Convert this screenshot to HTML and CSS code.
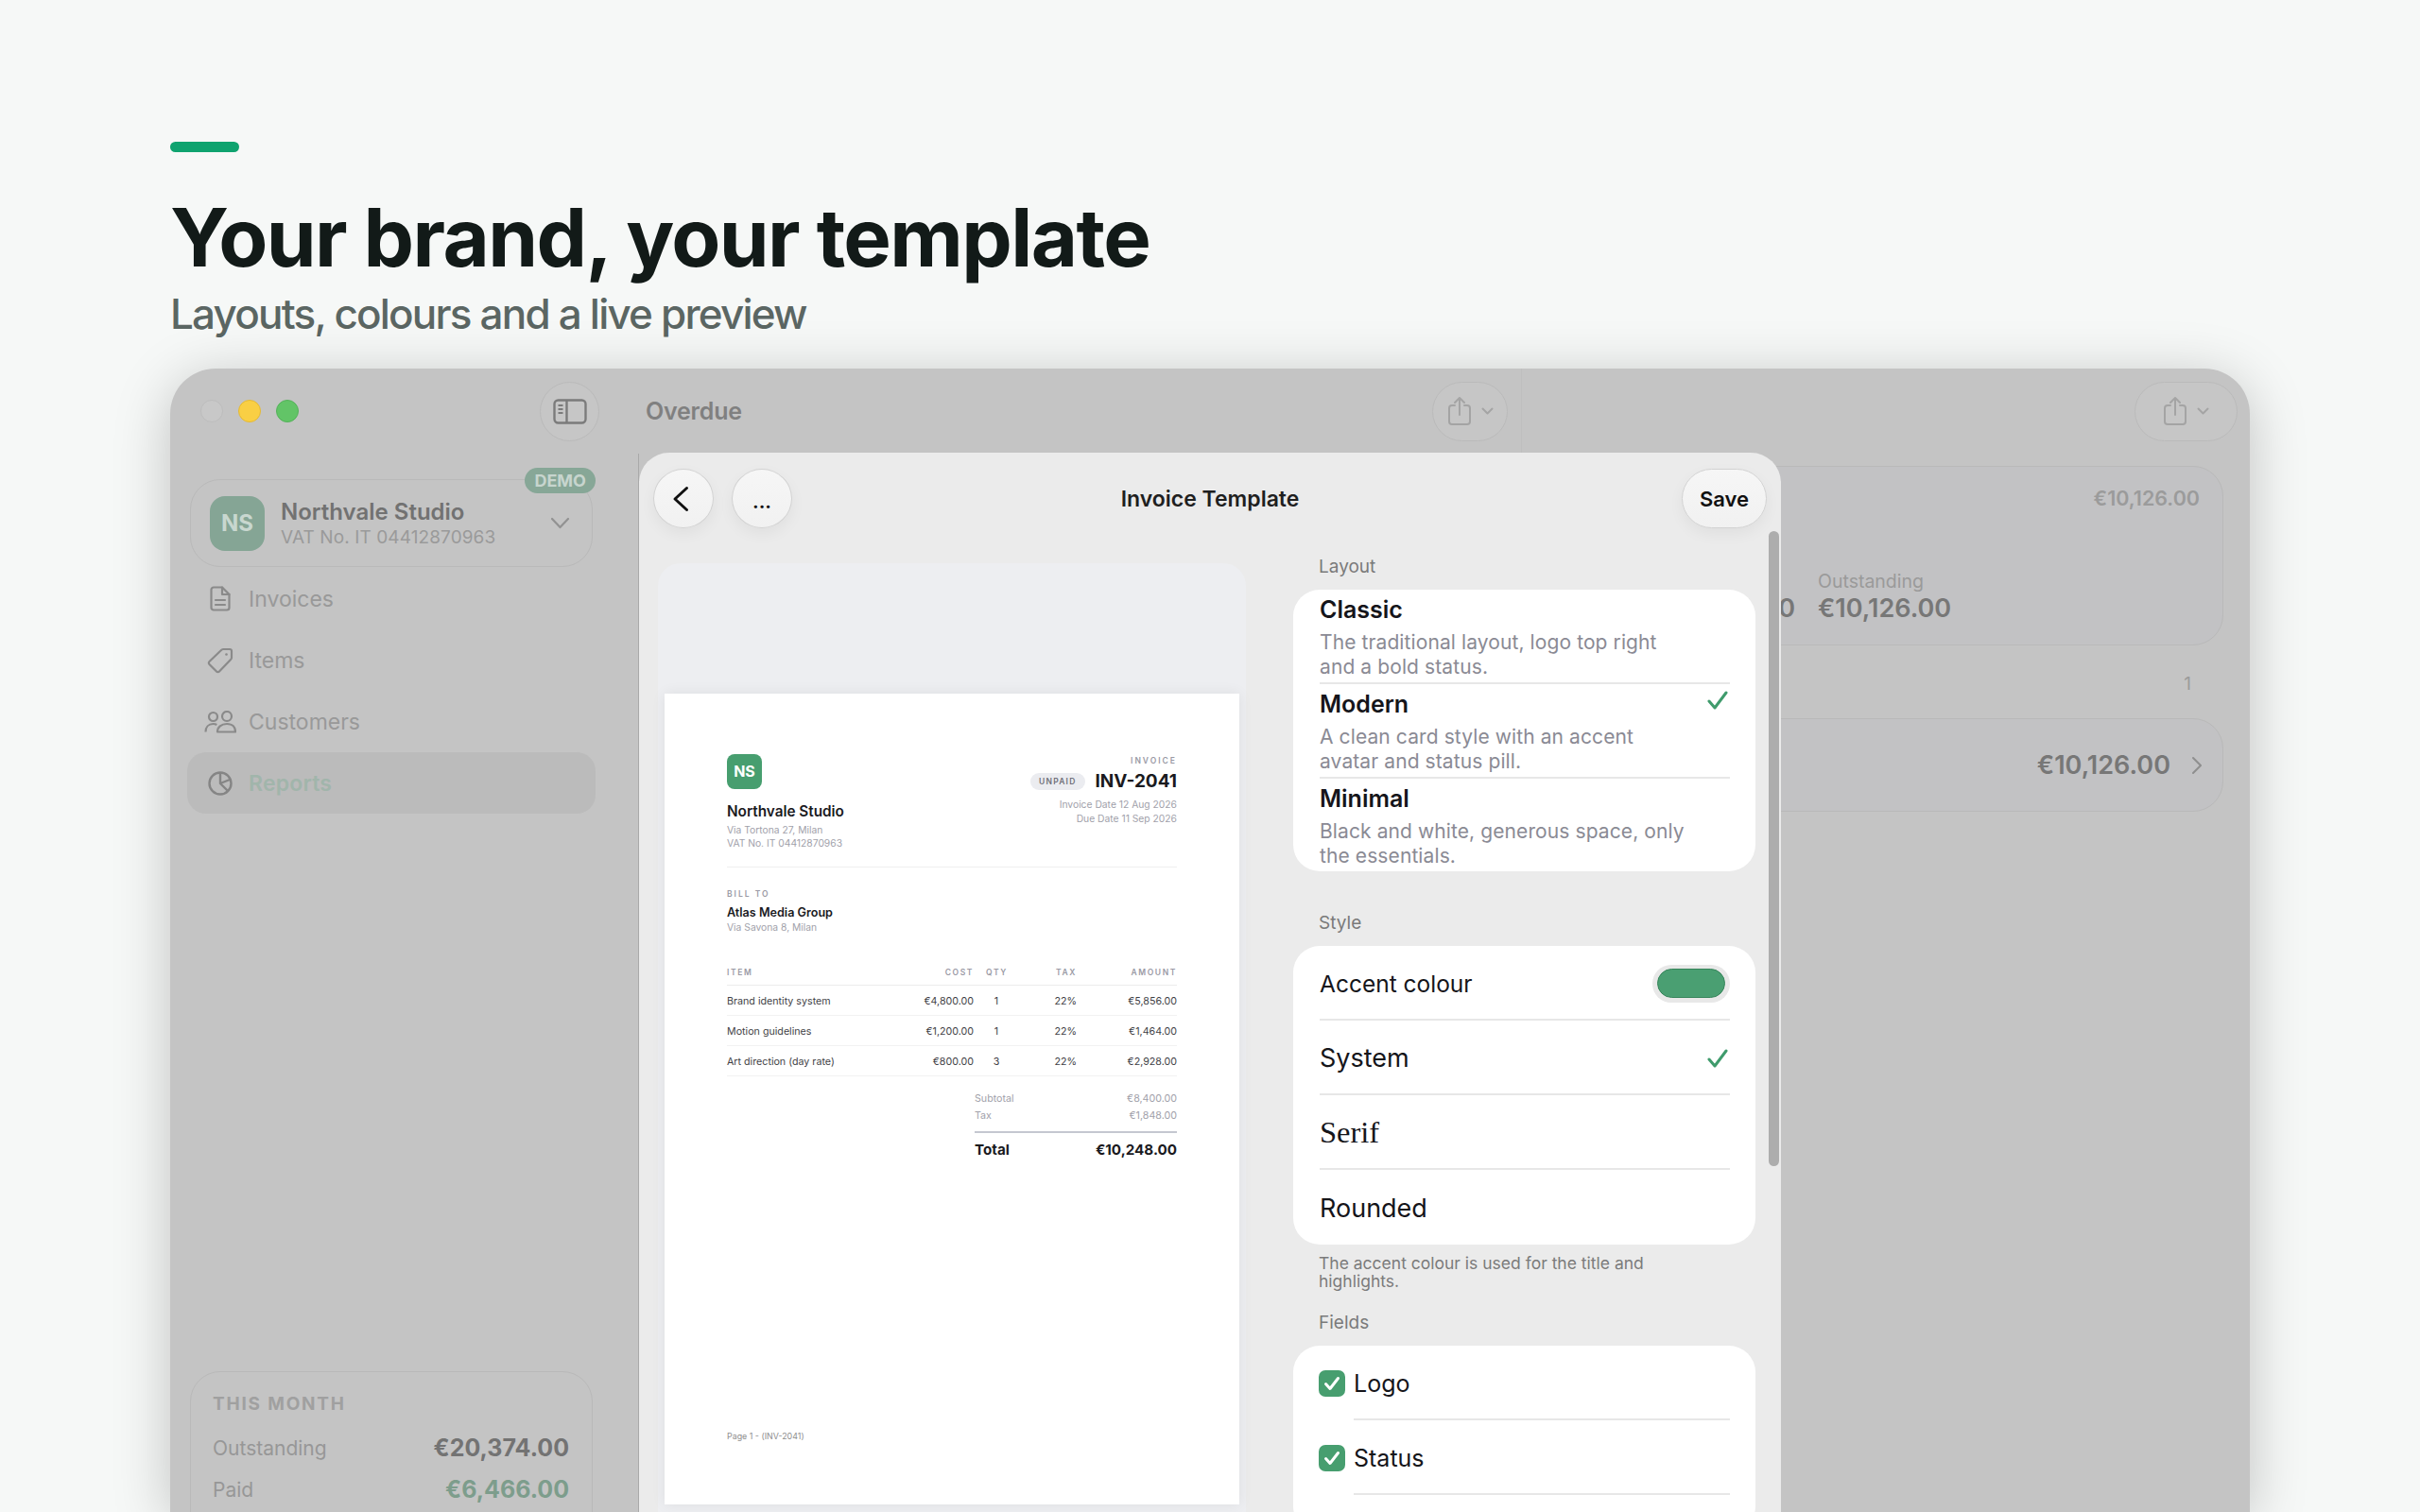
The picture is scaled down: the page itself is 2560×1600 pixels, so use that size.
FILE: index.html
```html
<!DOCTYPE html>
<html lang="en">
<head>
  <meta charset="UTF-8">
  <title>Your brand, your template</title>
  <link rel="stylesheet" href="styles.css">
</head>
<body>
  <div class="page">
    <div class="accent-bar"></div>
    <h1>Your brand, your template</h1>
    <p class="subtitle">Layouts, colours and a live preview</p>

    <div class="window">
      <aside class="sidebar">
        <div class="titlebar">
          <div class="lights">
            <span class="light light-red"></span>
            <span class="light light-yellow"></span>
            <span class="light light-green"></span>
          </div>
          <div class="round-btn">
            <svg width="36" height="27" viewBox="0 0 36 27" fill="none" stroke="#7b7b7b" stroke-width="2.4">
              <rect x="1.5" y="1.5" width="33" height="24" rx="4"/>
              <path d="M14.5 1.5v24"/>
              <path d="M5.5 7h5M5.5 11h5M5.5 15h5" stroke-width="1.8"/>
            </svg>
          </div>
        </div>

        <div class="account">
          <span class="demo-badge">DEMO</span>
          <div class="account-logo">NS</div>
          <div class="account-text">
            <div class="account-name">Northvale Studio</div>
            <div class="account-vat">VAT No. IT 04412870963</div>
          </div>
          <svg class="account-chevron" width="21" height="13" viewBox="0 0 21 13" fill="none" stroke="#929292" stroke-width="2.2" stroke-linecap="round" stroke-linejoin="round">
            <path d="M2 2l8.5 9L19 2"/>
          </svg>
        </div>

        <nav class="nav">
          <div class="nav-row">
            <span class="nav-icon">
              <svg width="22" height="27" viewBox="0 0 22 27" fill="none" stroke="#8a8a8a" stroke-width="2.2" stroke-linejoin="round" stroke-linecap="round">
                <path d="M4 1.5h9L20.5 9v14a2.5 2.5 0 0 1-2.5 2.5H4A2.5 2.5 0 0 1 1.5 23V4A2.5 2.5 0 0 1 4 1.5z"/>
                <path d="M13 1.5V9h7.5M6 15h10M6 20h10"/>
              </svg>
            </span>
            <span>Invoices</span>
          </div>
          <div class="nav-row">
            <span class="nav-icon">
              <svg width="28" height="28" viewBox="0 0 28 28" fill="none" stroke="#8a8a8a" stroke-width="2.2" stroke-linejoin="round">
                <path d="M17 2h7a2 2 0 0 1 2 2v7a3 3 0 0 1-1 2L13 25.5a2 2 0 0 1-3 0L2.5 18a2 2 0 0 1 0-3L15 3a3 3 0 0 1 2-1z"/>
                <circle cx="20.5" cy="7.5" r="1.3" fill="#8a8a8a" stroke="none"/>
              </svg>
            </span>
            <span>Items</span>
          </div>
          <div class="nav-row">
            <span class="nav-icon">
              <svg width="34" height="24" viewBox="0 0 34 24" fill="none" stroke="#8a8a8a" stroke-width="2.2" stroke-linejoin="round">
                <circle cx="9.5" cy="6.5" r="4.5"/>
                <circle cx="24" cy="6" r="5"/>
                <path d="M1.5 22.5c0-5 3-8.5 8-8.5 1.5 0 2.8.3 3.8 1"/>
                <path d="M14 22.5c0-5 4-8.5 10-8.5s9 3.5 9 8.5z"/>
              </svg>
            </span>
            <span>Customers</span>
          </div>
          <div class="nav-row nav-row-active">
            <span class="nav-icon">
              <svg width="26" height="26" viewBox="0 0 26 26" fill="none" stroke="#858585" stroke-width="2.4" stroke-linejoin="round">
                <circle cx="13" cy="13" r="11.5"/>
                <path d="M13 1.5V13l8 8M13 13l10-4"/>
              </svg>
            </span>
            <span>Reports</span>
          </div>
        </nav>

        <div class="month-card">
          <div class="month-title">THIS MONTH</div>
          <div class="month-row">
            <span class="month-label">Outstanding</span>
            <span class="month-value">€20,374.00</span>
          </div>
          <div class="month-row">
            <span class="month-label">Paid</span>
            <span class="month-value month-value-paid">€6,466.00</span>
          </div>
        </div>
      </aside>

      <section class="list-pane">
        <div class="topbar">
          <span class="topbar-title">Overdue</span>
          <div class="share-btn share-btn-small">
            <svg width="26" height="32" viewBox="0 0 26 32" fill="none" stroke="#a4a4a4" stroke-width="2" stroke-linecap="round" stroke-linejoin="round">
              <path d="M8 10H5a3 3 0 0 0-3 3v14a3 3 0 0 0 3 3h16a3 3 0 0 0 3-3V13a3 3 0 0 0-3-3h-3"/>
              <path d="M13 20V2M8 7l5-5 5 5"/>
            </svg>
            <svg width="13" height="8" viewBox="0 0 13 8" fill="none" stroke="#a4a4a4" stroke-width="2" stroke-linecap="round" stroke-linejoin="round">
              <path d="M1.5 1.5l5 5 5-5"/>
            </svg>
          </div>
        </div>
        <div class="list-body"></div>
      </section>

      <section class="detail-pane">
        <div class="topbar topbar-end">
          <div class="share-btn">
            <svg width="26" height="32" viewBox="0 0 26 32" fill="none" stroke="#a4a4a4" stroke-width="2" stroke-linecap="round" stroke-linejoin="round">
              <path d="M8 10H5a3 3 0 0 0-3 3v14a3 3 0 0 0 3 3h16a3 3 0 0 0 3-3V13a3 3 0 0 0-3-3h-3"/>
              <path d="M13 20V2M8 7l5-5 5 5"/>
            </svg>
            <svg width="13" height="8" viewBox="0 0 13 8" fill="none" stroke="#a4a4a4" stroke-width="2" stroke-linecap="round" stroke-linejoin="round">
              <path d="M1.5 1.5l5 5 5-5"/>
            </svg>
          </div>
        </div>

        <div class="summary-card">
          <div class="summary-total">€10,126.00</div>
          <div class="stats">
            <div class="stat stat-first">
              <div class="stat-label">Overdue</div>
              <div class="stat-value">€10,126.00</div>
            </div>
            <div class="stat">
              <div class="stat-label">Outstanding</div>
              <div class="stat-value">€10,126.00</div>
            </div>
          </div>
        </div>

        <div class="count-row">1</div>

        <div class="invoice-card">
          <span class="stat-value">€10,126.00</span>
          <svg width="12" height="20" viewBox="0 0 12 20" fill="none" stroke="#8e8e8e" stroke-width="2" stroke-linecap="round" stroke-linejoin="round">
            <path d="M2 2l8 8-8 8"/>
          </svg>
        </div>
      </section>

      <div class="modal">
        <header class="modal-header">
          <div class="modal-actions">
            <div class="glass-btn">
              <svg class="back-icon" width="18" height="28" viewBox="0 0 18 28" fill="none" stroke="#111" stroke-width="3" stroke-linecap="round" stroke-linejoin="round">
                <path d="M15.5 2.5L3 14l12.5 11.5"/>
              </svg>
            </div>
            <div class="glass-btn glass-btn-dots">...</div>
          </div>
          <div class="modal-title">Invoice Template</div>
          <div class="modal-actions modal-actions-end">
            <div class="glass-btn glass-btn-save">Save</div>
          </div>
        </header>

        <div class="modal-body">
          <div class="preview">
            <div class="paper">
              <div class="inv-head">
                <div>
                  <div class="inv-logo">NS</div>
                  <div class="inv-company">Northvale Studio</div>
                  <div class="inv-small">Via Tortona 27, Milan<br>VAT No. IT 04412870963</div>
                </div>
                <div class="inv-meta">
                  <div class="inv-caps">INVOICE</div>
                  <div class="inv-number-row">
                    <span class="inv-pill">UNPAID</span>
                    <span class="inv-number">INV-2041</span>
                  </div>
                  <div class="inv-small inv-dates">Invoice Date 12 Aug 2026<br>Due Date 11 Sep 2026</div>
                </div>
              </div>

              <div class="inv-billto">
                <div class="inv-caps">BILL TO</div>
                <div class="inv-client">Atlas Media Group</div>
                <div class="inv-small">Via Savona 8, Milan</div>
              </div>

              <div class="inv-line inv-line-head inv-caps">
                <span>ITEM</span><span class="num">COST</span><span class="qty">QTY</span><span class="num">TAX</span><span class="num">AMOUNT</span>
              </div>
              <div class="inv-line">
                <span>Brand identity system</span><span class="num">€4,800.00</span><span class="qty">1</span><span class="num">22%</span><span class="num">€5,856.00</span>
              </div>
              <div class="inv-line">
                <span>Motion guidelines</span><span class="num">€1,200.00</span><span class="qty">1</span><span class="num">22%</span><span class="num">€1,464.00</span>
              </div>
              <div class="inv-line">
                <span>Art direction (day rate)</span><span class="num">€800.00</span><span class="qty">3</span><span class="num">22%</span><span class="num">€2,928.00</span>
              </div>

              <div class="inv-totals">
                <div class="inv-sub"><span>Subtotal</span><span>€8,400.00</span></div>
                <div class="inv-sub"><span>Tax</span><span>€1,848.00</span></div>
                <div class="inv-total"><span>Total</span><span>€10,248.00</span></div>
              </div>

              <div class="inv-footer">Page 1 - (INV-2041)</div>
            </div>
          </div>

          <div class="settings">
            <div class="section-label">Layout</div>
            <div class="card">
              <div class="layout-item">
                <div>
                  <div class="layout-name">Classic</div>
                  <div class="layout-desc">The traditional layout, logo top right<br>and a bold status.</div>
                </div>
              </div>
              <div class="layout-item">
                <div>
                  <div class="layout-name">Modern</div>
                  <div class="layout-desc">A clean card style with an accent<br>avatar and status pill.</div>
                </div>
                <svg class="tick tick-top" width="22" height="20" viewBox="0 0 22 20" fill="none" stroke="#3f9b6c" stroke-width="3" stroke-linecap="round" stroke-linejoin="round">
                  <path d="M2 11l6 7L20 2"/>
                </svg>
              </div>
              <div class="layout-item">
                <div>
                  <div class="layout-name">Minimal</div>
                  <div class="layout-desc">Black and white, generous space, only<br>the essentials.</div>
                </div>
              </div>
            </div>

            <div class="section-label section-style">Style</div>
            <div class="card">
              <div class="row row-accent">
                <span>Accent colour</span>
                <span class="swatch"><span class="swatch-fill"></span></span>
              </div>
              <div class="row">
                <span>System</span>
                <svg class="tick" width="22" height="20" viewBox="0 0 22 20" fill="none" stroke="#3f9b6c" stroke-width="3" stroke-linecap="round" stroke-linejoin="round">
                  <path d="M2 11l6 7L20 2"/>
                </svg>
              </div>
              <div class="row row-serif"><span>Serif</span></div>
              <div class="row"><span>Rounded</span></div>
            </div>
            <p class="note">The accent colour is used for the title and<br>highlights.</p>

            <div class="section-label section-fields">Fields</div>
            <div class="card card-fields">
              <div class="field">
                <span class="checkbox">
                  <svg width="18" height="16" viewBox="0 0 18 16" fill="none" stroke="#fff" stroke-width="3" stroke-linecap="round" stroke-linejoin="round">
                    <path d="M2.5 8.5l4.5 5L15.5 2.5"/>
                  </svg>
                </span>
                <span class="field-label">Logo</span>
              </div>
              <div class="field">
                <span class="checkbox">
                  <svg width="18" height="16" viewBox="0 0 18 16" fill="none" stroke="#fff" stroke-width="3" stroke-linecap="round" stroke-linejoin="round">
                    <path d="M2.5 8.5l4.5 5L15.5 2.5"/>
                  </svg>
                </span>
                <span class="field-label">Status</span>
              </div>
            </div>
          </div>
        </div>

        <div class="scrollbar"></div>
      </div>
    </div>
  </div>
</body>
</html>
```

FILE: styles.css
```css
* {
  box-sizing: border-box;
}
body {
  margin: 0;
  background: #f6f8f7;
  font-family: Inter, "Liberation Sans", sans-serif;
}
.page {
  height: 1600px;
  padding: 150px 180px 0;
  overflow: hidden;
}
.accent-bar {
  width: 73px;
  height: 11px;
  border-radius: 6px;
  background: #0fa36f;
}
h1 {
  margin: 41px 0 0;
  font-size: 85px;
  line-height: 100px;
  font-weight: 700;
  letter-spacing: -1.6px;
  color: #121a18;
}
.subtitle {
  margin: 5px 0 0;
  font-size: 44px;
  line-height: 50px;
  font-weight: 500;
  letter-spacing: -1.8px;
  color: #5b6663;
}

/* app window, dimmed behind the sheet */
.window {
  position: relative;
  display: grid;
  grid-template-columns: 495px 934px 1fr;
  height: 1210px;
  margin-top: 33px;
  border-radius: 48px 48px 0 0;
  background: #c4c4c4;
  box-shadow: 0 10px 60px rgba(0, 0, 0, 0.22);
  overflow: hidden;
}
.sidebar {
  display: flex;
  flex-direction: column;
}
.titlebar {
  display: flex;
  align-items: center;
  justify-content: space-between;
  height: 90px;
  padding: 0 41px 0 32px;
}
.lights {
  display: flex;
  gap: 16px;
}
.light {
  width: 24px;
  height: 24px;
  border-radius: 50%;
}
.light-red {
  background: #c8c8c8;
  border: 1px solid #bcbcbc;
}
.light-yellow {
  background: #f9cf44;
  border: 1px solid #e3b935;
}
.light-green {
  background: #62c467;
  border: 1px solid #54b25a;
}
.round-btn {
  display: flex;
  align-items: center;
  justify-content: center;
  width: 63px;
  height: 63px;
  border-radius: 50%;
  border: 1px solid #bababa;
  background: #c6c6c6;
}

.account {
  position: relative;
  display: flex;
  align-items: center;
  gap: 17px;
  width: 426px;
  height: 93px;
  margin: 27px 0 0 21px;
  padding: 0 23px 0 20px;
  border: 1px solid #b9b9b9;
  border-radius: 32px;
}
.demo-badge {
  position: absolute;
  top: -13px;
  right: -4px;
  padding: 0 10px;
  border-radius: 14px;
  background: #87a797;
  font-size: 18px;
  line-height: 27px;
  font-weight: 700;
  color: #c7d5ce;
}
.account-logo {
  width: 58px;
  height: 58px;
  border-radius: 16px;
  background: #85a595;
  font-size: 24px;
  line-height: 58px;
  font-weight: 700;
  text-align: center;
  color: #c8d7cf;
}
.account-text {
  flex: 1;
}
.account-name {
  font-size: 24px;
  line-height: 30px;
  font-weight: 600;
  color: #727272;
}
.account-vat {
  font-size: 19px;
  line-height: 24px;
  letter-spacing: 0.1px;
  color: #9a9a9a;
}

.nav {
  margin: 0 0 0 18px;
  padding-top: 1px;
  width: 432px;
}
.nav-row {
  display: flex;
  align-items: center;
  gap: 13px;
  height: 65px;
  padding-left: 18px;
  border-radius: 20px;
  font-size: 23px;
  color: #999;
}
.nav-row-active {
  background: #bbb;
  font-weight: 600;
  letter-spacing: 0.2px;
  color: #a1b5ab;
}
.nav-icon {
  display: flex;
  justify-content: center;
  width: 34px;
}

.month-card {
  width: 426px;
  margin: 590px 0 0 21px;
  padding: 22px 24px 60px 23px;
  border: 1px solid #b9b9b9;
  border-radius: 32px;
}
.month-title {
  margin-bottom: 19px;
  font-size: 19px;
  line-height: 24px;
  font-weight: 700;
  letter-spacing: 1.8px;
  color: #a0a0a0;
}
.month-row {
  display: flex;
  align-items: center;
  justify-content: space-between;
  margin-bottom: 14px;
}
.month-label {
  font-size: 21px;
  color: #979797;
}
.month-value {
  font-size: 25px;
  line-height: 30px;
  font-weight: 700;
  color: #737373;
}
.month-value-paid {
  color: #7d9d8c;
}

.list-pane {
  display: flex;
  flex-direction: column;
}
.list-body {
  flex: 1;
  border-left: 1px solid #a9a9a9;
}
.detail-pane {
  border-left: 1px solid #bfbfbf;
}
.topbar {
  display: flex;
  align-items: center;
  justify-content: space-between;
  flex: none;
  height: 90px;
  padding: 0 14px 0 8px;
}
.topbar-end {
  justify-content: flex-end;
  padding-right: 13px;
}
.topbar-title {
  font-size: 25px;
  font-weight: 600;
  letter-spacing: -0.2px;
  color: #808080;
}
.share-btn {
  display: flex;
  align-items: center;
  justify-content: center;
  gap: 10px;
  width: 109px;
  height: 63px;
  border: 1px solid #bababa;
  border-radius: 32px;
  background: #c6c6c6;
}
.share-btn-small {
  width: 80px;
}
.summary-card {
  height: 190px;
  margin: 13px 28px 0 30px;
  padding: 21px 24px 0 0;
  border: 1px solid #b9b9b9;
  border-radius: 32px;
  background: #c2c2c4;
}
.summary-total {
  font-size: 21.5px;
  line-height: 24px;
  font-weight: 600;
  text-align: right;
  color: #9b9b9b;
}
.stats {
  display: grid;
  grid-template-columns: 258px 1fr;
  column-gap: 24px;
  margin-top: 64px;
}
.stat-first .stat-value {
  text-align: right;
}
.stat-label {
  font-size: 19.5px;
  line-height: 24px;
  color: #9a9a9a;
}
.stat-value {
  font-size: 27px;
  line-height: 30px;
  font-weight: 600;
  color: #777;
}
.stat .stat-value {
  margin-top: 2px;
}
.count-row {
  height: 77px;
  padding: 4px 62px 0 0;
  font-size: 19px;
  line-height: 74px;
  text-align: right;
  color: #9b9b9b;
}
.invoice-card {
  display: flex;
  align-items: center;
  justify-content: flex-end;
  gap: 22px;
  height: 99px;
  margin: 0 28px 0 30px;
  padding-right: 21px;
  border: 1px solid #b9b9b9;
  border-radius: 32px;
  background: #c2c2c4;
}

/* the sheet */
.modal {
  position: absolute;
  left: 496px;
  top: 89px;
  bottom: 0;
  width: 1208px;
  border-radius: 32px 32px 0 0;
  background: #ebebeb;
  overflow: hidden;
}
.modal-header {
  display: grid;
  grid-template-columns: 1fr auto 1fr;
  align-items: center;
  padding: 17px 15px 0;
}
.modal-actions {
  display: flex;
  gap: 19px;
}
.modal-actions-end {
  justify-content: flex-end;
}
.modal-title {
  font-size: 23px;
  font-weight: 600;
  color: #1f1f1f;
}
.glass-btn {
  display: flex;
  align-items: center;
  justify-content: center;
  width: 64px;
  height: 63px;
  border: 1px solid #d2d2d2;
  border-radius: 50%;
  background: linear-gradient(#f6f6f6, #f1f1f1);
  box-shadow: 0 6px 16px rgba(0, 0, 0, 0.05);
  color: #111;
}
.back-icon {
  margin-right: 6px;
}
.glass-btn-dots {
  padding-top: 6px;
  font-size: 21px;
  font-weight: 600;
}
.glass-btn-save {
  width: 90px;
  border-radius: 32px;
  font-size: 22px;
  font-weight: 600;
}
.modal-body {
  display: grid;
  grid-template-columns: 622px 489px;
  column-gap: 50px;
  padding-left: 20px;
}
.preview {
  margin-top: 37px;
  padding: 138px 7px 60px;
  border-radius: 24px 24px 0 0;
  background: #edeef1;
}

/* invoice page */
.paper {
  display: flex;
  flex-direction: column;
  height: 858px;
  padding: 64px 66px 67px;
  background: #fff;
  box-shadow: 0 0 14px rgba(0, 0, 0, 0.07);
}
.inv-head {
  display: flex;
  justify-content: space-between;
  padding-bottom: 18px;
  border-bottom: 1px solid #efefef;
}
.inv-logo {
  width: 37px;
  height: 37px;
  border-radius: 8px;
  background: #479e6f;
  font-size: 16px;
  line-height: 37px;
  font-weight: 700;
  text-align: center;
  color: #fff;
}
.inv-company {
  margin-top: 15px;
  font-size: 15.3px;
  line-height: 18px;
  font-weight: 600;
  color: #1a1a1e;
}
.inv-small {
  margin-top: 2.5px;
  font-size: 10.3px;
  line-height: 14px;
  color: #a1a1aa;
}
.inv-meta {
  padding-top: 2px;
  text-align: right;
}
.inv-caps {
  font-size: 8.5px;
  line-height: 10px;
  font-weight: 600;
  letter-spacing: 2px;
  color: #9a9aa5;
}
.inv-number-row {
  display: flex;
  align-items: center;
  justify-content: flex-end;
  gap: 11px;
  margin-top: 5.5px;
}
.inv-pill {
  height: 18px;
  padding: 0 9px;
  border-radius: 9px;
  background: #ebecf0;
  font-size: 8.5px;
  line-height: 18px;
  font-weight: 600;
  letter-spacing: 1.2px;
  color: #71717a;
}
.inv-number {
  font-size: 19px;
  line-height: 22px;
  font-weight: 700;
  color: #1a1a1e;
}
.inv-dates {
  margin-top: 6.5px;
  line-height: 15px;
}
.inv-billto {
  margin-top: 23px;
}
.inv-client {
  margin-top: 7px;
  font-size: 12.6px;
  line-height: 15px;
  font-weight: 600;
  color: #1a1a1e;
}
.inv-billto .inv-small {
  margin-top: 1.5px;
}
.inv-line {
  display: grid;
  grid-template-columns: 1fr 80px 35px 74px 106px;
  align-items: center;
  height: 32px;
  padding-top: 2px;
  border-bottom: 1px solid #f2f2f2;
  font-size: 10.7px;
  color: #3f3f46;
}
.inv-line-head {
  align-items: start;
  height: 19px;
  margin-top: 35.5px;
  padding-top: 0;
  border-bottom-color: #ececec;
  font-size: 8.5px;
  letter-spacing: 1.6px;
  color: #9a9aa5;
}
.num {
  text-align: right;
}
.qty {
  padding-left: 13px;
  text-align: center;
}
.inv-totals {
  width: 214px;
  margin: 15.5px 0 0 auto;
}
.inv-sub {
  display: flex;
  justify-content: space-between;
  font-size: 10.7px;
  line-height: 18px;
  color: #a1a1aa;
}
.inv-total {
  display: flex;
  justify-content: space-between;
  margin-top: 7px;
  padding-top: 8px;
  border-top: 2px solid #c5c7d0;
  font-size: 15.2px;
  line-height: 20px;
  font-weight: 700;
  color: #1a1a1e;
}
.inv-footer {
  margin-top: auto;
  font-size: 8.9px;
  line-height: 10px;
  color: #8e8e8e;
}

/* settings column */
.settings {
  padding-top: 29px;
}
.section-label {
  margin: 0 0 12px 27px;
  font-size: 19px;
  line-height: 24px;
  color: #7a7a7a;
}
.section-style {
  margin-top: 43px;
  margin-bottom: 12px;
}
.section-fields {
  margin-top: 23px;
}
.card {
  border-radius: 28px;
  background: #fff;
  overflow: hidden;
}
.layout-item {
  display: flex;
  justify-content: space-between;
  align-items: flex-start;
  height: 100px;
  margin: 0 27px 0 28px;
  padding-top: 5.5px;
  border-bottom: 2px solid #e7e7e7;
}
.layout-item:last-child {
  height: 98px;
  border-bottom: 0;
}
.layout-name {
  font-size: 25px;
  line-height: 30px;
  font-weight: 600;
  color: #15151a;
}
.layout-desc {
  margin-top: 7px;
  font-size: 21px;
  line-height: 26px;
  letter-spacing: 0.1px;
  color: #8a8a94;
}
.tick {
  margin-right: 2px;
}
.tick-top {
  margin-top: 1px;
}
.row {
  display: flex;
  align-items: center;
  justify-content: space-between;
  height: 79px;
  margin: 0 27px 0 28px;
  padding-top: 2px;
  border-bottom: 2px solid #e7e7e7;
  font-size: 27px;
  color: #15151a;
}
.row:last-child {
  border-bottom: 0;
}
.row-accent {
  font-size: 24.5px;
}
.row-serif {
  font-family: "Liberation Serif", serif;
  font-size: 32.5px;
}
.swatch {
  width: 82px;
  height: 40px;
  padding: 4px 5px;
  border-radius: 20px;
  background: #e8e8e8;
}
.swatch-fill {
  display: block;
  height: 31px;
  border: 1px solid #37855b;
  border-radius: 16px;
  background: #4a9f72;
}
.note {
  margin: 10px 0 0 27px;
  font-size: 17.5px;
  line-height: 19px;
  color: #7b7b7b;
}
.card-fields {
  padding-bottom: 40px;
}
.field {
  display: flex;
  gap: 9px;
  height: 79px;
  margin: 0 27px;
}
.checkbox {
  display: flex;
  align-items: center;
  justify-content: center;
  flex: none;
  width: 28px;
  height: 28px;
  margin-top: 26px;
  border-radius: 7px;
  background: #479e6f;
}
.field-label {
  flex: 1;
  border-bottom: 2px solid #e7e7e7;
  font-size: 25px;
  line-height: 80px;
  color: #15151a;
}
.scrollbar {
  position: absolute;
  top: 83px;
  right: 2px;
  width: 11px;
  height: 672px;
  border-radius: 6px;
  background: #adadad;
}
```
